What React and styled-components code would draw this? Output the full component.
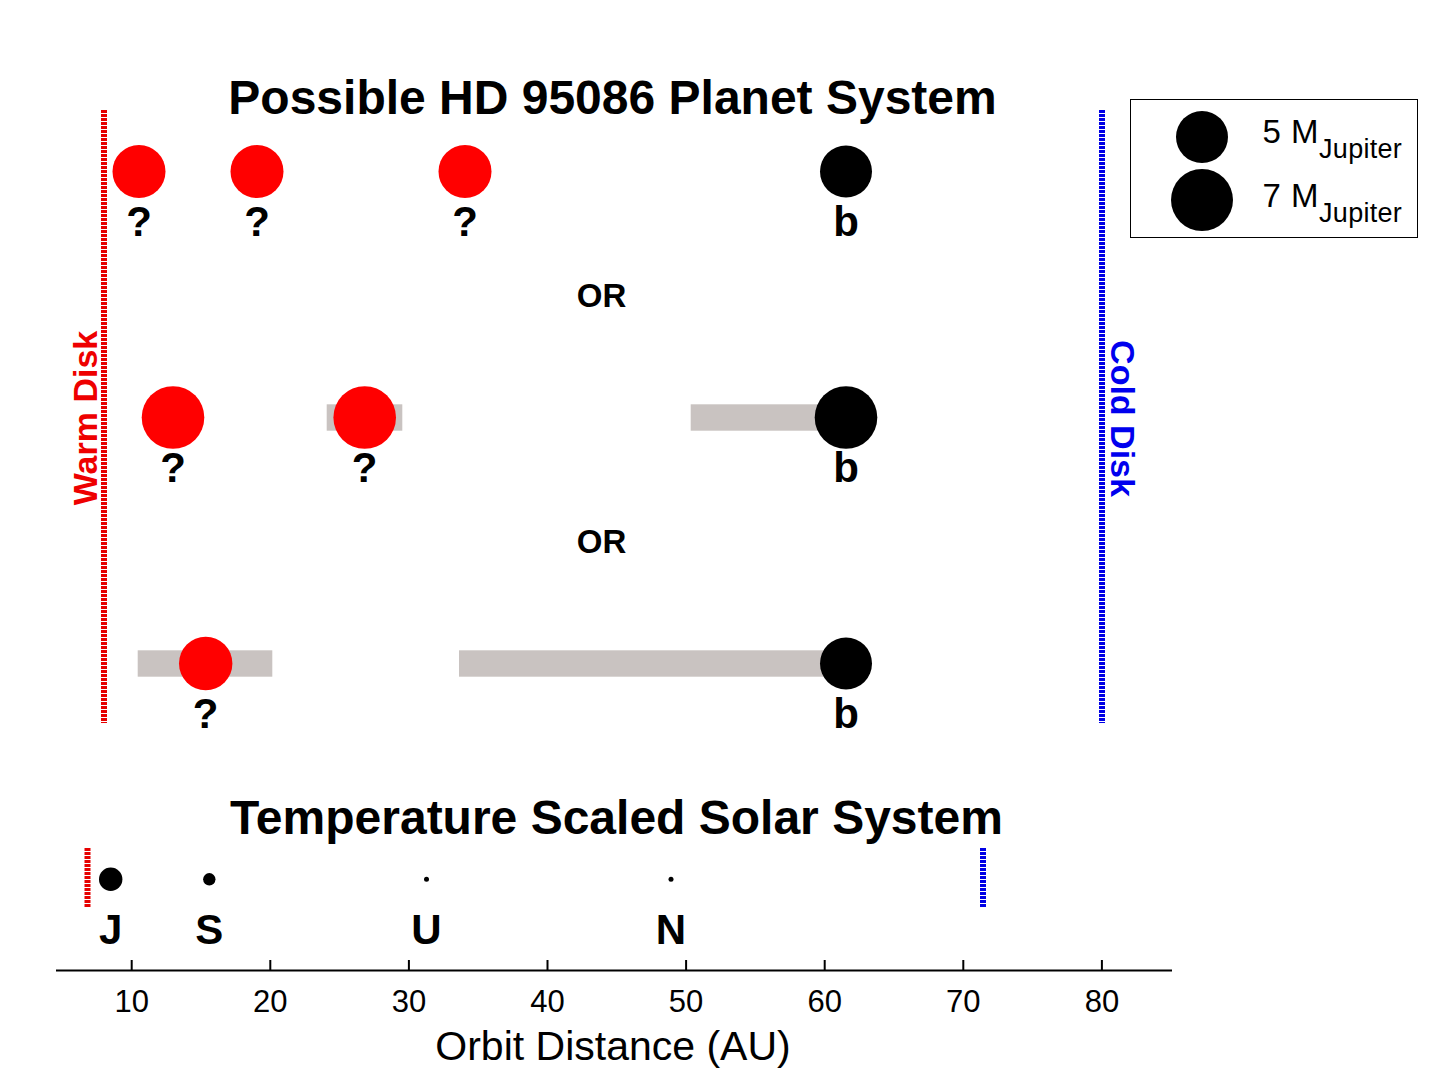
import React from 'react';
import styled, { createGlobalStyle } from 'styled-components';

const GlobalStyle = createGlobalStyle`
  html, body {
    margin: 0;
    padding: 0;
    background: #fff;
  }
  body {
    font-family: "Liberation Sans", Arial, sans-serif;
    color: #000;
  }
`;

const RED = '#ff0000';
const RED_LINE = '#e60000';
const BLUE_LINE = '#0000e6';
const BAR = '#c9c3c1';

const Figure = styled.div`
  width: 1440px;
  height: 1080px;
  display: flex;
  flex-direction: column;
  overflow: hidden;
  background: #fff;
`;

const TopSection = styled.section`
  display: grid;
  grid-template-columns: 1130px 288px;
  align-items: start;
`;

const PlotColumn = styled.div`
  display: flex;
  flex-direction: column;
`;

const Title = styled.h1`
  margin: ${(p) => p.$top}px 0 0;
  padding: 0 ${(p) => p.$padRight || 0}px 0 ${(p) => p.$padLeft || 0}px;
  font-size: 48px;
  line-height: 48px;
  font-weight: 700;
  text-align: center;
  white-space: nowrap;
`;

const PlotSvg = styled.svg`
  display: block;
  overflow: visible;
  font-family: "Liberation Sans", Arial, sans-serif;
`;

const DiskLine = styled.line`
  stroke: ${(p) => p.$color};
  stroke-width: 6;
  stroke-dasharray: 3 1;
`;

const DiskLabel = styled.text`
  fill: ${(p) => p.$color};
  font-size: 34px;
  font-weight: 700;
  text-anchor: middle;
`;

const Bar = styled.rect`
  fill: ${BAR};
`;

const PlanetLabel = styled.text`
  font-size: 42px;
  font-weight: 700;
  text-anchor: middle;
  fill: #000;
`;

const OrText = styled.text`
  font-size: 33px;
  font-weight: 700;
  text-anchor: middle;
  fill: #000;
`;

const Legend = styled.div`
  margin-top: 99px;
  width: 288px;
  height: 139px;
  box-sizing: border-box;
  border: 1.5px solid #000;
  padding: 6px 0 5px;
  display: flex;
  flex-direction: column;
`;

const LegendRow = styled.div`
  height: ${(p) => p.$h}px;
  display: flex;
  align-items: center;
`;

const MarkerSlot = styled.div`
  width: 122px;
  padding-left: 9.5px;
  flex-shrink: 0;
  display: flex;
  justify-content: center;
  align-items: center;
`;

const Dot = styled.div`
  width: ${(p) => p.$d}px;
  height: ${(p) => p.$d}px;
  border-radius: 50%;
  background: #000;
`;

const LegendLabel = styled.div`
  align-self: flex-start;
  margin-top: ${(p) => p.$top}px;
  font-size: 33px;
  line-height: 33px;
  letter-spacing: 0.5px;
  white-space: nowrap;
`;

const Sub = styled.span`
  font-size: 27px;
  line-height: 27px;
  letter-spacing: 0.3px;
  vertical-align: -15px;
`;

const BottomSection = styled.section`
  display: flex;
  flex-direction: column;
`;

const AxisLine = styled.line`
  stroke: #000;
  stroke-width: 2;
`;

const TickLabel = styled.text`
  font-size: 31px;
  text-anchor: middle;
  fill: #000;
`;

const AxisLabel = styled.div`
  padding-right: 214px;
  font-size: 41px;
  line-height: 40px;
  text-align: center;
  white-space: nowrap;
`;

// candidate system rows (page coordinates)
const rows = [
  {
    y: 171.5,
    bars: [],
    planets: [
      { x: 139, r: 26.5, color: RED, label: '?' },
      { x: 257, r: 26.5, color: RED, label: '?' },
      { x: 465, r: 26.5, color: RED, label: '?' },
      { x: 846, r: 26, color: '#000', label: 'b' },
    ],
  },
  {
    y: 417.5,
    bars: [
      [326.7, 402.3],
      [690.7, 846],
    ],
    planets: [
      { x: 173, r: 31.3, color: RED, label: '?' },
      { x: 364.7, r: 31.3, color: RED, label: '?' },
      { x: 846, r: 31.3, color: '#000', label: 'b' },
    ],
  },
  {
    y: 663.5,
    bars: [
      [137.7, 272.3],
      [459, 846],
    ],
    planets: [
      { x: 205.7, r: 26.7, color: RED, label: '?' },
      { x: 846, r: 26, color: '#000', label: 'b' },
    ],
  },
];

const auToX = (au) => 131.7 + (au - 10) * 13.86;

const solar = [
  { x: 110.7, r: 11.7, label: 'J' },
  { x: 209.3, r: 6.2, label: 'S' },
  { x: 426.5, r: 2.5, label: 'U' },
  { x: 671, r: 2.5, label: 'N' },
];

const ticks = [10, 20, 30, 40, 50, 60, 70, 80];

const App = () => {
  return (
    <>
      <GlobalStyle />
      <Figure>
        <TopSection>
          <PlotColumn>
            <Title $top={74} $padLeft={95}>
              Possible HD 95086 Planet System
            </Title>
            <PlotSvg width="1130" height="620" viewBox="0 122 1130 620">
              <DiskLine $color={RED_LINE} x1="104" y1="110" x2="104" y2="723" />
              <DiskLine $color={BLUE_LINE} x1="1102" y1="110" x2="1102" y2="723" />
              <g transform="translate(96.7 418) rotate(-90)">
                <DiskLabel $color="#ee0000" x="0" y="0">Warm Disk</DiskLabel>
              </g>
              <g transform="translate(1110.5 418.5) rotate(90)">
                <DiskLabel $color="#0000ee" x="0" y="0">Cold Disk</DiskLabel>
              </g>

              {rows.map((row, i) => (
                <g key={i}>
                  {row.bars.map(([x1, x2], j) => (
                    <Bar key={j} x={x1} y={row.y - 13.2} width={x2 - x1} height="26.4" />
                  ))}
                  {row.planets.map((p, j) => (
                    <g key={j}>
                      <circle cx={p.x} cy={row.y} r={p.r} fill={p.color} />
                      <PlanetLabel x={p.x} y={row.y + 64.5}>
                        {p.label}
                      </PlanetLabel>
                    </g>
                  ))}
                </g>
              ))}

              <OrText x="601.5" y="306.5">OR</OrText>
              <OrText x="601.5" y="552.5">OR</OrText>
            </PlotSvg>
          </PlotColumn>

          <Legend>
            <LegendRow $h={62}>
              <MarkerSlot>
                <Dot $d={52} />
              </MarkerSlot>
              <LegendLabel $top={9}>
                5 M<Sub>Jupiter</Sub>
              </LegendLabel>
            </LegendRow>
            <LegendRow $h={64}>
              <MarkerSlot>
                <Dot $d={62} />
              </MarkerSlot>
              <LegendLabel $top={11}>
                7 M<Sub>Jupiter</Sub>
              </LegendLabel>
            </LegendRow>
          </Legend>
        </TopSection>

        <BottomSection>
          <Title $top={52} $padRight={207}>
            Temperature Scaled Solar System
          </Title>
          <PlotSvg width="1440" height="184" viewBox="0 842 1440 184">
            <DiskLine $color={RED_LINE} x1="87.5" y1="848" x2="87.5" y2="908" />
            <DiskLine $color={BLUE_LINE} x1="983" y1="848" x2="983" y2="908" />
            {solar.map((p) => (
              <g key={p.label}>
                <circle cx={p.x} cy="879.3" r={p.r} fill="#000" />
                <PlanetLabel x={p.x} y="943.5">
                  {p.label}
                </PlanetLabel>
              </g>
            ))}
            <AxisLine x1="56" y1="970.5" x2="1172" y2="970.5" />
            {ticks.map((t) => (
              <g key={t}>
                <AxisLine x1={auToX(t)} y1="960" x2={auToX(t)} y2="970.5" />
                <TickLabel x={auToX(t)} y="1011.6">
                  {t}
                </TickLabel>
              </g>
            ))}
          </PlotSvg>
          <AxisLabel>Orbit Distance (AU)</AxisLabel>
        </BottomSection>
      </Figure>
    </>
  );
};

export default App;
